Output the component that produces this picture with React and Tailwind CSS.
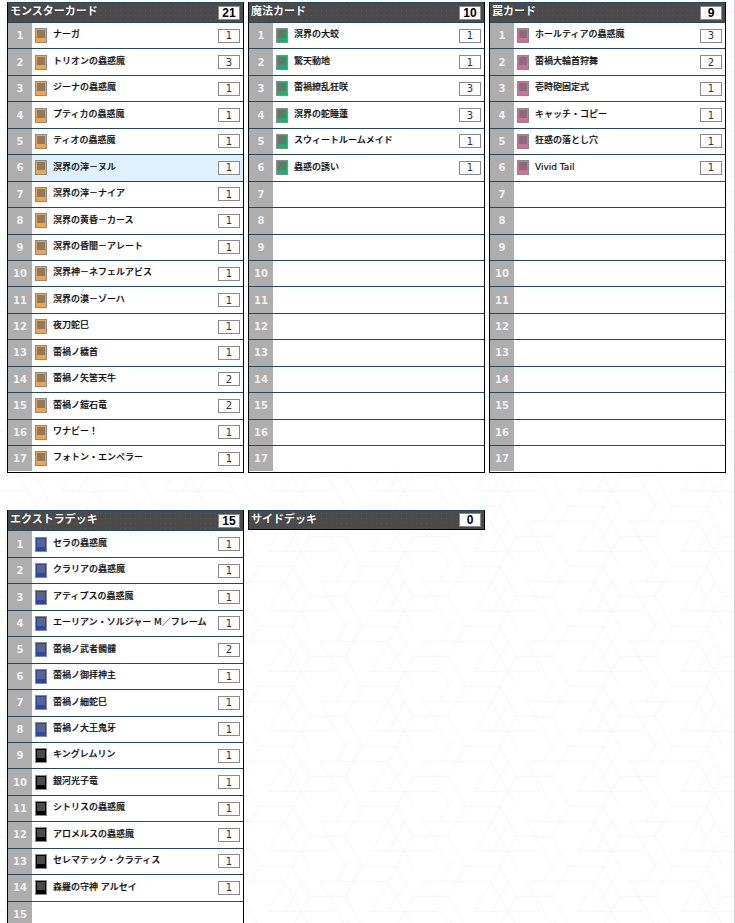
const SEGS = [
  [193, 19, 300, 19], [68, 64, 270, 64], [38, 109, 143, 109], [222, 154, 420, 154],
  [143, 109, 195, 19], [143, 109, 195, 199], [38, 109, -14, 19], [38, 109, -14, 199],
  [118, 64, 155, 0], [222, 154, 300, 19], [274, 154, 325, 64], [68, 64, 145, 199], [270, 64, 348, 199],
];
const OFFSETS = [];
for (const dx of [-310, 0, 310]) for (const dy of [-180, 0, 180]) OFFSETS.push([dx, dy]);

function Backdrop() {
  return (
    <svg className="absolute inset-0 w-full h-full" aria-hidden="true">
      <defs>
        <pattern id="hex" x="-12.7" y="20" width="103.33" height="60" patternUnits="userSpaceOnUse" viewBox="0 0 310 180">
          {OFFSETS.map(([dx, dy]) =>
            SEGS.map((s, i) => (
              <line key={`${dx}-${dy}-${i}`} x1={s[0] + dx} y1={s[1] + dy} x2={s[2] + dx} y2={s[3] + dy} stroke="#f1f4f5" strokeWidth="2.4" />
            ))
          )}
        </pattern>
      </defs>
      <rect width="100%" height="100%" fill="url(#hex)" />
    </svg>
  );
}

function CardIcon({ kind }) {
  if (kind === "monster")
    return (
      <span className="w-3 h-[15px] border border-[#8a8a8a] bg-[#f0a54a] shrink-0 flex justify-center pt-px">
        <span className="w-2 h-2 bg-[#8f7a60]" />
      </span>
    );
  if (kind === "spell")
    return (
      <span className="w-3 h-[15px] border border-[#8a8a8a] bg-[#12b56e] shrink-0 flex justify-center pt-px">
        <span className="w-2 h-2 bg-[#5e7a6c]" />
      </span>
    );
  if (kind === "trap")
    return (
      <span className="w-3 h-[15px] border border-[#8a8a8a] bg-[#cf6f9c] shrink-0 flex justify-center pt-px">
        <span className="w-2 h-2 bg-[#8d6a7c]" />
      </span>
    );
  if (kind === "fusion")
    return (
      <span className="w-3 h-[15px] border border-[#8a8a8a] bg-[#2a48ac] shrink-0 flex justify-center pt-px">
        <span className="w-2 h-2 bg-[#5a6290] bg-[radial-gradient(#a89a70_0.7px,transparent_0.7px)] bg-size-[2px_2px]" />
      </span>
    );
  return (
    <span className="w-3 h-[15px] border border-[#8a8a8a] bg-black shrink-0 flex justify-center pt-px">
      <span className="w-2 h-2 bg-[#4a4a4a]" />
    </span>
  );
}

function Header({ title, count, closed }) {
  return (
    <div
      className={`flex items-center justify-between h-[20px] pl-[2px] pr-[3px] border-t border-[#264a5c] bg-[#4a4a4a] bg-[radial-gradient(#575757_0.8px,transparent_0.8px)] bg-size-[5px_5px] ${closed ? "border-x border-b border-x-black border-b-black" : ""}`}
    >
      <span className="text-white text-[11px] font-bold -mt-[5px] font-['Noto_Sans_CJK_JP',sans-serif] [text-shadow:0_0_1px_#111]">
        {title}
      </span>
      <span className="w-[22px] h-[14px] bg-white border border-[#8a8a8a] flex items-center justify-center text-black text-[12px] font-bold font-['Liberation_Sans',sans-serif]">
        {count}
      </span>
    </div>
  );
}

function Row({ n, card, kind, active }) {
  return (
    <div className={`flex items-stretch h-[26.45px] border-t border-[#264a5c] ${active ? "bg-[#dff1ff]" : "bg-white"}`}>
      <div className="w-6 shrink-0 bg-[#aeaeae] flex items-center justify-center text-[#f0f0f0] text-[10px] font-bold font-['DejaVu_Sans',sans-serif]">
        {n}
      </div>
      {card && (
        <div className="flex-1 flex items-center pl-[3px] pr-[3px]">
          <CardIcon kind={card.k || kind} />
          <span className="ml-[6px] flex-1 whitespace-nowrap text-[9px] font-medium leading-none -mt-[1.5px] text-[#111] font-['DejaVu_Sans','Noto_Sans_CJK_JP',sans-serif] [text-shadow:0_0_1px_#999]">
            {card.name}
          </span>
          <span className="w-[22px] h-[14px] border border-[#8a8a8a] bg-white flex items-center justify-center text-[10px] text-[#333] font-['DejaVu_Sans',sans-serif]">
            {card.c}
          </span>
        </div>
      )}
    </div>
  );
}

function Panel({ title, count, kind, cards, rows }) {
  return (
    <div className="border-x border-b border-black pb-px">
      <Header title={title} count={count} />
      {Array.from({ length: rows }, (_, i) => (
        <Row key={i} n={i + 1} card={cards[i]} kind={kind} active={kind === "monster" && i === 5} />
      ))}
    </div>
  );
}

const c = (name, count = 1, k) => ({ name, c: count, k });

const monster = [
  c("ナーガ"), c("トリオンの蟲惑魔", 3), c("ジーナの蟲惑魔"), c("プティカの蟲惑魔"), c("ティオの蟲惑魔"),
  c("溟界の滓－ヌル"), c("溟界の滓－ナイア"), c("溟界の黄昏－カース"), c("溟界の昏闇－アレート"), c("溟界神－ネフェルアビス"),
  c("溟界の漠－ゾーハ"), c("夜刀蛇巳"), c("蕾禍ノ穢首"), c("蕾禍ノ矢筈天牛", 2), c("蕾禍ノ鎧石竜", 2),
  c("ワナビー！"), c("フォトン・エンペラー"),
];
const spell = [
  c("溟界の大蛟"), c("驚天動地"), c("蕾禍繚乱狂咲", 3), c("溟界の蛇睡蓮", 3), c("スウィートルームメイド"), c("蟲惑の誘い"),
];
const trap = [
  c("ホールティアの蟲惑魔", 3), c("蕾禍大輪首狩舞", 2), c("壱時砲固定式"), c("キャッチ・コピー"), c("狂惑の落とし穴"), c("Vivid Tail"),
];
const extra = [
  c("セラの蟲惑魔", 1, "fusion"), c("クラリアの蟲惑魔", 1, "fusion"), c("アティプスの蟲惑魔", 1, "fusion"),
  c("エーリアン・ソルジャー M／フレーム", 1, "fusion"), c("蕾禍ノ武者髑髏", 2, "fusion"), c("蕾禍ノ御拝神主", 1, "fusion"),
  c("蕾禍ノ細蛇巳", 1, "fusion"), c("蕾禍ノ大王鬼牙", 1, "fusion"), c("キングレムリン", 1, "xyz"), c("銀河光子竜", 1, "xyz"),
  c("シトリスの蟲惑魔", 1, "xyz"), c("アロメルスの蟲惑魔", 1, "xyz"), c("セレマテック・クラティス", 1, "xyz"), c("森羅の守神 アルセイ", 1, "xyz"),
];

export default function App() {
  return (
    <div className="relative h-[923px] overflow-hidden bg-white border-r border-[#d4d4dc]">
      <Backdrop />
      <div className="relative pt-[2px] pl-[7px] grid grid-cols-[repeat(3,237px)] gap-x-[4px] gap-y-[37px] items-start">
        <Panel title="モンスターカード" count={21} kind="monster" cards={monster} rows={17} />
        <Panel title="魔法カード" count={10} kind="spell" cards={spell} rows={17} />
        <Panel title="罠カード" count={9} kind="trap" cards={trap} rows={17} />
        <Panel title="エクストラデッキ" count={15} kind="fusion" cards={extra} rows={15} />
        <Header title="サイドデッキ" count={0} closed />
      </div>
    </div>
  );
}
